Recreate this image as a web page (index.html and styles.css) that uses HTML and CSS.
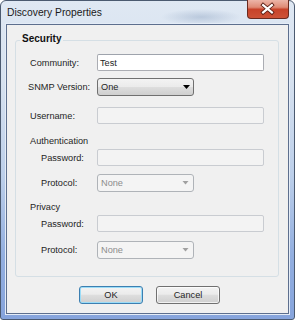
FILE: index.html
```html
<!DOCTYPE html>
<html>
<head>
<meta charset="utf-8">
<title>Discovery Properties</title>
<link rel="stylesheet" href="styles.css">
</head>
<body>
<div class="window">
  <div class="titlebar">
    <span class="title">Discovery Properties</span>
    <span class="close">
      <svg width="42" height="18" viewBox="0 0 42 18">
        <path d="M16.5 5 L25.5 12.5 M25.5 5 L16.5 12.5" stroke="#5b1f16" stroke-width="4" stroke-linecap="square" fill="none"/>
        <path d="M16.5 5 L25.5 12.5 M25.5 5 L16.5 12.5" stroke="#ffffff" stroke-width="2.2" stroke-linecap="square" fill="none"/>
      </svg>
    </span>
  </div>
  <div class="client">
    <div class="group">
      <span class="legend">Security</span>
      <div class="row r1"><span class="lbl">Community:</span><span class="tb">Test</span></div>
      <div class="row r2"><span class="lbl snmp">SNMP Version:</span><span class="cb">One<svg class="arr" width="7" height="4" viewBox="0 0 7 4"><path d="M0 0 H7 L3.5 4 Z" fill="#000"/></svg></span></div>
      <div class="row r3"><span class="lbl">Username:</span><span class="tb dis"></span></div>
      <div class="row head r4"><span class="lbl">Authentication</span></div>
      <div class="row r5"><span class="lbl sub">Password:</span><span class="tb dis"></span></div>
      <div class="row r6"><span class="lbl sub">Protocol:</span><span class="cb dis">None<svg class="arr" width="7" height="4" viewBox="0 0 7 4"><path d="M0.5 0 H6.5 L3.5 3.5 Z" fill="#a0a0a0"/></svg></span></div>
      <div class="row head r7"><span class="lbl">Privacy</span></div>
      <div class="row r8"><span class="lbl sub">Password:</span><span class="tb dis"></span></div>
      <div class="row r9"><span class="lbl sub">Protocol:</span><span class="cb dis">None<svg class="arr" width="7" height="4" viewBox="0 0 7 4"><path d="M0.5 0 H6.5 L3.5 3.5 Z" fill="#a0a0a0"/></svg></span></div>
    </div>
    <div class="buttons">
      <span class="btn default">OK</span>
      <span class="btn">Cancel</span>
    </div>
  </div>
</div>
</body>
</html>
```

FILE: styles.css
```css
* { box-sizing: border-box; }
html, body { margin: 0; padding: 0; }
body {
  width: 295px;
  height: 320px;
  overflow: hidden;
  font-family: "Liberation Sans", Arial, sans-serif;
  font-size: 9.2px;
  color: #1e1e1e;
  background: #ffffff;
}
.window {
  width: 295px;
  height: 320px;
  border: 1px solid #4b5a70;
  border-radius: 6px 6px 3px 3px;
  background:
    radial-gradient(ellipse 40px 8px at 200px 16px, rgba(120,145,180,0.35), rgba(120,145,180,0) 100%),
    linear-gradient(180deg, #dfe8f3 0%, #d6e1ef 25%, #bccfea 55%, #93afe0 80%, #86a4dc 100%);
  padding: 0 5px 5px 5px;
  display: flex;
  flex-direction: column;
}
.titlebar {
  height: 23px;
  display: flex;
  align-items: flex-start;
  flex: none;
}
.title {
  font-family: "Liberation Sans", Arial, sans-serif;
  font-size: 10.3px;
  color: #1a1a1a;
  margin-top: 6px;
  padding-left: 1px;
  line-height: 12px;
}
.close {
  margin-left: auto;
  margin-top: -1px;
  width: 42px;
  height: 19px;
  border: 1px solid #6a2a1f;
  border-top: none;
  border-radius: 0 0 4px 4px;
  background: linear-gradient(180deg, #ecb5a8 0%, #df8b76 40%, #c8432a 52%, #cd5237 100%);
  display: flex;
  align-items: flex-start;
  justify-content: center;
  overflow: hidden;
}
.close svg { display: block; margin-left: -1px; }
.client {
  flex: 1;
  background: #f0f0f0;
  border: 1px solid #5d6f8e;
  box-shadow: 0 0 0 1px #e4ecf7;
  display: flex;
  flex-direction: column;
}
.group {
  position: relative;
  margin: 15px 9px 0 8px;
  height: 237px;
  border: 1px solid #d5dfe5;
  border-radius: 3px;
  flex: none;
}
.legend {
  position: absolute;
  top: -8px;
  left: 4px;
  padding: 0 2px;
  background: #f0f0f0;
  font-weight: bold;
  font-size: 10px;
  line-height: 12px;
  color: #111;
}
.row {
  display: flex;
  align-items: center;
}
.lbl {
  width: 81px;
  flex: none;
  padding-left: 14px;
  line-height: 12px;
  white-space: nowrap;
}
.lbl.snmp { padding-left: 12px; }
.lbl.sub { padding-left: 25px; }
.head { height: 14px; }
.r1 { margin-top: 13px; }
.r2 { margin-top: 7px; }
.r3 { margin-top: 11px; }
.r4 { margin-top: 10px; }
.r5 { margin-top: 1px; }
.r6 { margin-top: 8px; }
.r7 { margin-top: 8px; }
.r8 { margin-top: 1px; }
.r9 { margin-top: 9px; }
.tb {
  width: 167px;
  height: 17px;
  border: 1px solid #abadb3;
  border-top-color: #9ea3ac;
  border-radius: 2px;
  background: #ffffff;
  display: flex;
  align-items: center;
  padding-left: 2px;
}
.tb.dis {
  background: #f3f3f3;
  border-color: #c9ccd1;
}
.cb {
  width: 97px;
  height: 18px;
  border: 1px solid #707070;
  border-radius: 3px;
  background: linear-gradient(180deg, #f3f3f3 0%, #ebebeb 48%, #dddddd 52%, #cfcfcf 100%);
  display: flex;
  align-items: center;
  padding-left: 3px;
}
.cb .arr { margin-left: auto; margin-right: 3px; display: block; }
.cb.dis {
  background: #f4f4f4;
  border-color: #afb3b8;
  color: #8d8d8d;
}
.cb.dis .arr { margin-right: 4px; }
.buttons {
  display: flex;
  gap: 13px;
  margin-top: 9px;
  padding-left: 72px;
}
.btn {
  width: 64px;
  height: 18px;
  border: 1px solid #707070;
  border-radius: 3px;
  background: linear-gradient(180deg, #f3f3f3 0%, #ebebeb 45%, #dddddd 52%, #cfcfcf 100%);
  box-shadow: inset 0 0 0 1px rgba(255,255,255,0.7);
  display: flex;
  align-items: center;
  justify-content: center;
  color: #1e1e1e;
}
.btn.default {
  border-color: #3c7fb1;
  box-shadow: inset 0 0 0 1px #9bdcf7;
}
```
